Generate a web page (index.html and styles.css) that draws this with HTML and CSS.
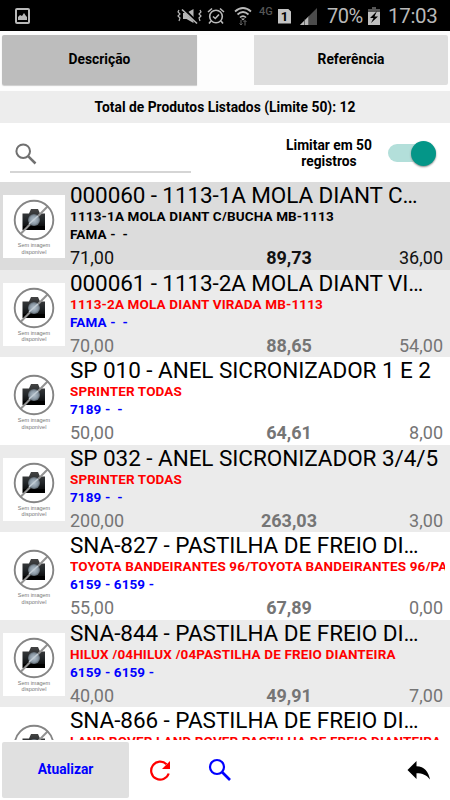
FILE: index.html
```html
<!DOCTYPE html>
<html lang="pt-BR">
<head>
<meta charset="utf-8">
<title>Produtos</title>
<link rel="stylesheet" href="styles.css">
</head>
<body>
<svg class="defs" width="0" height="0" aria-hidden="true">
  <defs>
    <linearGradient id="body" x1="0" y1="0" x2="0" y2="1"><stop offset="0" stop-color="#444"/><stop offset=".5" stop-color="#23272a"/><stop offset="1" stop-color="#000"/></linearGradient>
    <radialGradient id="lens"><stop offset="0" stop-color="#b4c2ce"/><stop offset=".7" stop-color="#8997a3"/><stop offset="1" stop-color="#5b646c"/></radialGradient>
    <symbol id="camera" viewBox="0 0 62 62">
      <path d="M19.500 18.500h6.500l2-4.500h7l2 4.500h5v16.500h-22.500z" fill="url(#body)"/>
      <path d="M20 31h22v4H20z" fill="#000"/>
      <path d="M18 38.500L45 11" stroke="#929292" stroke-width="2"/>
      <circle cx="31" cy="25" r="6" fill="url(#lens)"/>
      <path d="M26 29l9-8" stroke="#c2ccd4" stroke-width="1.500"/>
      <circle cx="31" cy="25" r="19.300" fill="none" stroke="#858585" stroke-width="1.900"/>
    </symbol>
  </defs>
</svg>
<header class="status">
  <svg class="pic" width="16" height="16" viewBox="0 0 16 16"><rect x="1" y="1" width="13" height="14" rx="1" fill="none" stroke="#b9b9b9" stroke-width="2"/><path d="M3 12V9l2-2 2 1 2-3 2 3 1 1v3z" fill="#b9b9b9"/></svg>
  <svg class="mute" width="25" height="18" viewBox="0 0 25 18" fill="none" stroke="#b5b5b5"><path d="M2 3l-1 2 2 2-2 2 2 2-1 3M23 3l1 2-2 2 2 2-2 2 1 3" stroke-width="1.200"/><path d="M6 6v6h3.500l7 4V2l-7 4z" fill="#b5b5b5" stroke="none"/><path d="M6 1.500l15 15" stroke="#000" stroke-width="3"/><path d="M5 2.500l15 14" stroke-width="1.600"/></svg>
  <svg class="alarm" width="18" height="18" viewBox="0 0 18 18" fill="none" stroke="#b9b9b9" stroke-width="1.600"><circle cx="9" cy="9.500" r="6.300"/><path d="M1 5l4-3.500M17 5l-4-3.500M4 14l-2 2.500M14 14l2 2.500M6 9.500l2.300 2 3.700-4"/></svg>
  <svg class="wifi" width="18" height="20" viewBox="0 0 18 20" fill="none" stroke="#b9b9b9" stroke-width="1.700"><path d="M1 5.500q8-7 16 0M3.500 8.500q5.500-5 11 0M6 11.500q3-2.800 6 0"/><path d="M7 12.500h4l-2 2z" fill="#b9b9b9" stroke="none"/><path d="M7 19v-5M5.500 17.500L7 19l1.500-1.500M11 14.500v5M9.500 16l1.500-1.500 1.500 1.500" stroke="#666" stroke-width="1"/></svg>
  <span class="net">4G</span>
  <span class="sim">1</span>
  <svg class="signal" width="17" height="17" viewBox="0 0 17 17"><path d="M17 0v17H0z" fill="#4c4c4c"/><path d="M9 8v9H0z" fill="#b9b9b9"/><path d="M4.500 11v6M8.500 8v9" stroke="#333" stroke-width=".6"/></svg>
  <span class="pct">70%</span>
  <svg class="batt" width="12" height="18" viewBox="0 0 12 18"><path d="M4 0h4v2h4v3H0V2h4z" fill="#555"/><path d="M0 5h12v13H0z" fill="#c0c0c0"/><path d="M9 4l-7 7h3.500L3 16l7-6.500H6.500z" fill="#000"/></svg>
  <span class="clock">17:03</span>
</header>
<nav class="tabs"><button class="tab active">Descrição</button><button class="tab">Referência</button></nav>
<div class="total">Total de Produtos Listados (Limite 50): 12</div>
<section class="filter">
  <div class="search"><svg width="24" height="24" viewBox="0 0 24 24" fill="none" stroke="#707070"><circle cx="9.200" cy="9.200" r="6.800" stroke-width="2"/><path d="M14.300 14.300l7.200 7.200" stroke-width="2.500"/></svg></div>
  <div class="limit">Limitar em 50<br>registros</div>
  <div class="switch"><i></i></div>
</section>
<main class="list">
  <article class="row selected"><div class="thumb"><svg class="photo"><use href="#camera"/></svg><small>Sem imagem<br>disponível</small></div><div class="info"><h2 class="tight">000060 - 1113-1A MOLA DIANT C…</h2><p class="desc">1113-1A MOLA DIANT C/BUCHA MB-1113</p><p class="brand">FAMA -&nbsp; -</p><div class="nums"><span>71,00</span><b>89,73</b><span>36,00</span></div></div></article>
  <article class="row alt"><div class="thumb"><svg class="photo"><use href="#camera"/></svg><small>Sem imagem<br>disponível</small></div><div class="info"><h2 class="tight">000061 - 1113-2A MOLA DIANT VI…</h2><p class="desc">1113-2A MOLA DIANT VIRADA MB-1113</p><p class="brand">FAMA -&nbsp; -</p><div class="nums"><span>70,00</span><b>88,65</b><span>54,00</span></div></div></article>
  <article class="row"><div class="thumb"><svg class="photo"><use href="#camera"/></svg><small>Sem imagem<br>disponível</small></div><div class="info"><h2>SP 010 - ANEL SICRONIZADOR 1 E 2</h2><p class="desc">SPRINTER TODAS</p><p class="brand">7189 -&nbsp; -</p><div class="nums"><span>50,00</span><b>64,61</b><span>8,00</span></div></div></article>
  <article class="row alt"><div class="thumb"><svg class="photo"><use href="#camera"/></svg><small>Sem imagem<br>disponível</small></div><div class="info"><h2>SP 032 - ANEL SICRONIZADOR 3/4/5</h2><p class="desc">SPRINTER TODAS</p><p class="brand">7189 -&nbsp; -</p><div class="nums"><span>200,00</span><b>263,03</b><span>3,00</span></div></div></article>
  <article class="row"><div class="thumb"><svg class="photo"><use href="#camera"/></svg><small>Sem imagem<br>disponível</small></div><div class="info"><h2>SNA-827 - PASTILHA DE FREIO DI…</h2><p class="desc">TOYOTA BANDEIRANTES 96/TOYOTA BANDEIRANTES 96/PA</p><p class="brand">6159 - 6159 -</p><div class="nums"><span>55,00</span><b>67,89</b><span>0,00</span></div></div></article>
  <article class="row alt"><div class="thumb"><svg class="photo"><use href="#camera"/></svg><small>Sem imagem<br>disponível</small></div><div class="info"><h2>SNA-844 - PASTILHA DE FREIO DI…</h2><p class="desc">HILUX /04HILUX /04PASTILHA DE FREIO DIANTEIRA</p><p class="brand">6159 - 6159 -</p><div class="nums"><span>40,00</span><b>49,91</b><span>7,00</span></div></div></article>
  <article class="row"><div class="thumb"><svg class="photo"><use href="#camera"/></svg></div><div class="info"><h2>SNA-866 - PASTILHA DE FREIO DI…</h2><p class="desc">LAND ROVER LAND ROVER PASTILHA DE FREIO DIANTEIRA</p></div></article>
</main>
<footer class="bar">
  <button class="update">Atualizar</button>
  <svg class="reload" width="24" height="24" viewBox="0 0 24 24"><path d="M20.700 15.500A9 9 0 1 1 18.500 6.200" fill="none" stroke="#f00" stroke-width="2.200"/><path d="M22 3v8h-8z" fill="#f00"/></svg>
  <svg class="find" width="24" height="24" viewBox="0 0 24 24" fill="none" stroke="#00f"><circle cx="9" cy="9" r="7" stroke-width="2.200"/><path d="M14 14l8 8" stroke-width="2.700"/></svg>
  <svg class="back" width="24" height="20" viewBox="0 0 24 20"><path d="M9.500 0v5.200C17.500 5.500 21.500 10.500 23 18.500 19.500 14 15.500 12.300 9.500 12.300V18L.5 9z" fill="#000"/></svg>
</footer>
</body>
</html>
```
FILE: styles.css
```css
* { box-sizing: border-box; }
body { margin: 0; width: 450px; height: 800px; display: flex; flex-direction: column; overflow: hidden; background: #fdfdfd; font-family: Roboto, sans-serif; color: #000; }
.defs { position: absolute; }
h2, p { margin: 0; }
button { border: 0; padding: 0 0 2px; color: #000; font: bold 13.8px Roboto, sans-serif; }
.status { flex: none; height: 31px; background: #000; color: #b9b9b9; display: flex; align-items: center; padding: 1px 12px 0 15px; }
.status svg { flex: none; }
.mute { margin-left: 146px; }
.alarm { margin-left: 5px; }
.wifi { margin-left: 9px; }
.net { margin: -9px 0 0 7px; width: 19px; font-size: 11px; font-weight: 500; color: #555; }
.sim { width: 13px; height: 15px; background: #c4c4c4; color: #000; font: bold 13px/15px Roboto, sans-serif; text-align: center; clip-path: polygon(0 0, 75% 0, 100% 20%, 100% 100%, 0 100%); }
.signal { margin-left: 9px; }
.pct { margin-left: 10px; width: 41px; font-size: 20px; white-space: nowrap; letter-spacing: -.5px; }
.clock { margin-left: 8px; font-size: 20.5px; letter-spacing: -.3px; white-space: nowrap; }
.tabs { flex: none; height: 60px; padding: 4px 2px 6px; display: flex; justify-content: space-between; }
.tab { width: 194px; background: #dedede; border-radius: 0 2px 2px 0; }
.tab.active { width: 195px; background: #bdbdbd; border-radius: 2px 0 0 2px; box-shadow: 0 1px 1px #ccc; }
.total { flex: none; height: 32px; background: #ededed; text-align: center; font-weight: bold; font-size: 13.8px; line-height: 32px; letter-spacing: .02px; }
.filter { flex: none; height: 59px; display: flex; background: #fff; }
.search { width: 181px; height: 50px; margin-left: 10px; padding: 19px 0 0 4px; border-bottom: 2px solid #d5d5d5; }
.search svg { display: block; }
.limit { width: 110px; margin-left: 83px; padding-top: 14px; text-align: center; font-weight: bold; font-size: 13.8px; line-height: 16px; }
.switch { width: 48px; height: 18px; margin: 21px 0 0 4px; border-radius: 9px; background: #b3dfda; display: flex; justify-content: flex-end; align-items: center; }
.switch i { width: 25px; height: 25px; border-radius: 50%; background: #049688; box-shadow: 0 1px 2px #888; }
.list { flex: none; height: 558px; overflow: hidden; background: #fff; }
.row { height: 87.5px; display: flex; background: #fff; color: #757575; }
.row.alt { background: #ebebeb; }
.row.selected { background: #dcdcdc; color: #111; }
.thumb { flex: none; width: 62px; height: 63px; margin: 13px 5px 0 3px; background: #fff; position: relative; }
.photo { display: block; width: 62px; height: 62px; }
.thumb small { position: absolute; left: 0; top: 47px; width: 62px; text-align: center; font: 5.5px/6.5px "Liberation Sans", sans-serif; color: #777; }
.info { flex: 1; min-width: 0; }
h2 { height: 27px; font-size: 22.5px; line-height: 27px; font-weight: normal; letter-spacing: -.05px; color: #000; white-space: nowrap; }
.tight { letter-spacing: -.1px; }
.desc { width: 375px; height: 12px; overflow: hidden; white-space: nowrap; font-size: 13.49px; line-height: 14px; font-weight: bold; letter-spacing: .15px; color: #f00; }
.brand { margin-top: 4px; height: 19px; font-size: 13.49px; line-height: 19px; font-weight: bold; letter-spacing: .12px; color: #00f; }
.selected .desc, .selected .brand { color: #000; }
.nums { display: grid; grid-template-columns: 125px 188px 60px; height: 26px; line-height: 27px; font-size: 18px; }
.nums b { text-align: center; }
.nums span:last-child { text-align: right; }
.bar { flex: none; height: 60px; background: #fff; padding: 2px; display: flex; }
.update { width: 127px; height: 56px; background: #e0e0e0; color: #00f; border-radius: 2px; }
.reload { margin: 16px 0 0 19px; }
.find { margin: 16px 0 0 36px; }
.back { margin: 19px 17px 0 auto; }
```
